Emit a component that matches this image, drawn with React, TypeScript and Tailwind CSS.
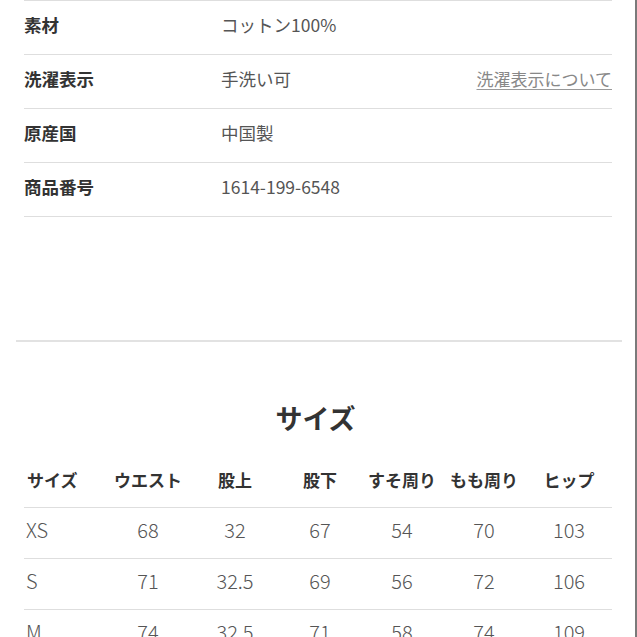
import React from "react";

const font = { fontFamily: '"Noto Sans CJK JP", "Noto Sans", sans-serif' };

const specs = [
  { label: "素材", value: "コットン100%" },
  { label: "洗濯表示", value: "手洗い可", link: "洗濯表示について" },
  { label: "原産国", value: "中国製" },
  { label: "商品番号", value: "1614-199-6548" },
];

const headers = ["サイズ", "ウエスト", "股上", "股下", "すそ周り", "もも周り", "ヒップ"];
const rows = [
  ["XS", "68", "32", "67", "54", "70", "103"],
  ["S", "71", "32.5", "69", "56", "72", "106"],
  ["M", "74", "32.5", "71", "58", "74", "109"],
];

const gridCols = "grid grid-cols-[80px_88px_86px_84px_80px_84px_86px]";

export default function App() {
  return (
    <div
      className="w-[637px] h-[637px] overflow-hidden bg-white border-r-2 border-[#7a7a7a]"
      style={font}
    >
      <div className="ml-[24px] w-[588px] border-t border-[#dedede]">
        {specs.map((s) => (
          <div
            key={s.label}
            className="h-[54px] border-b border-[#dedede] flex items-center pb-[6px]"
          >
            <div className="w-[197px] text-[17.5px] font-bold text-[#333] leading-none">{s.label}</div>
            <div className="flex-1 text-[17.5px] text-[#555] leading-none">{s.value}</div>
            {s.link && (
              <div className="text-[17px] text-[#888] leading-none underline underline-offset-[3px] decoration-[#999]">
                {s.link}
              </div>
            )}
          </div>
        ))}
      </div>

      <div className="h-[123px]" />
      <div className="ml-[16px] w-[606px] border-t-2 border-[#e2e2e2]" />

      <div className="mt-[57px] h-[36px] flex items-center justify-center pr-[4px]">
        <h2 className="text-[27px] font-bold text-[#333] leading-none">サイズ</h2>
      </div>

      <div className="ml-[24px] w-[588px] mt-[19px]">
        <div className={`${gridCols} h-[54px] border-b border-[#dedede] items-center pb-[3px]`}>
          {headers.map((h, i) => (
            <div
              key={h}
              className={`text-[17px] font-bold text-[#333] leading-none ${i === 0 ? "pl-[3px] text-left" : "text-center"}`}
            >
              {h}
            </div>
          ))}
        </div>
        {rows.map((r) => (
          <div
            key={r[0]}
            className={`${gridCols} h-[51px] border-b border-[#dedede] items-center pb-[7px]`}
          >
            {r.map((c, i) => (
              <div
                key={i}
                className={`text-[20px] font-light text-[#555] leading-none ${i === 0 ? "pl-[2px] text-left" : "text-center"}`}
              >
                {c}
              </div>
            ))}
          </div>
        ))}
      </div>
    </div>
  );
}
